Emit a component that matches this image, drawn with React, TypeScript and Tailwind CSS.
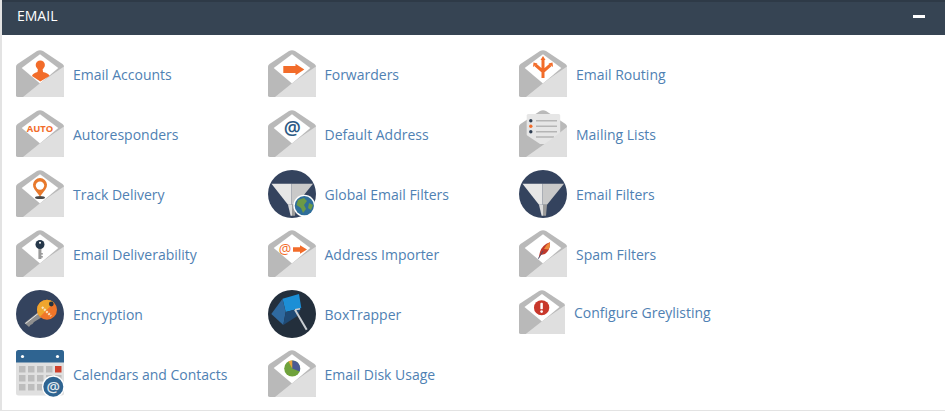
import type { ReactNode } from "react";

const ORANGE = "#f26c2a";

function Env({ children, w = 48, h = 48 }: { children?: ReactNode; w?: number; h?: number }) {
  return (
    <svg viewBox="0 0 48 48" width={w} height={h} className="shrink-0 block" preserveAspectRatio="none">
      <path d="M0 16.5 Q0 15 1.5 14 L21 1 Q24 -0.6 27 1 L46.5 14 Q48 15 48 16.5 L48 45.5 Q48 47 46 47 L2 47 Q0 47 0 45.5 Z" fill="#b9b9b9" />
      <path d="M5.7 18 L24 4.3 L42.3 18 L24 33.5 Z" fill="#ffffff" />
      <path d="M7 47 L24 33.2 L34 26 L48 16.5 L48 45.5 Q48 47 46 47 Z" fill="#dfdfdf" />
      {children}
    </svg>
  );
}

function Disc({ fill, children }: { fill: string; children?: ReactNode }) {
  return (
    <svg viewBox="0 0 48 48" width={48} height={48} className="shrink-0 block">
      <circle cx="24" cy="24" r="24" fill={fill} />
      {children}
    </svg>
  );
}

function Funnel() {
  return (
    <>
      <path d="M3.5 13.7 L23.5 13.7 L23.5 34.7 L20 34.7 Z" fill="#e6e6e6" />
      <path d="M23.5 13.7 L45 13.7 L28 34.7 L23.5 34.7 Z" fill="#c9c9c9" />
      <path d="M20 34.7 L24 34.7 L24 45.7 L22.6 45.7 Z" fill="#dcdcdc" />
      <path d="M24 34.7 L28 34.7 L27 45.7 L24 45.7 Z" fill="#9a9a9a" />
    </>
  );
}

function Arrow({ x1, x2, y, head, hh, sh }: { x1: number; x2: number; y: number; head: number; hh: number; sh: number }) {
  return (
    <path
      d={`M${x1} ${y - sh} L${head} ${y - sh} L${head} ${y - hh} L${x2} ${y} L${head} ${y + hh} L${head} ${y + sh} L${x1} ${y + sh} Z`}
      fill={ORANGE}
    />
  );
}

const icons: Record<string, ReactNode> = {
  person: (
    <Env>
      <circle cx="24.3" cy="15" r="4.6" fill={ORANGE} />
      <path d="M22 18 L26.5 18 L27 22 Q33 23.5 33.5 26 L24.3 31.5 L16 26 Q16.5 23.5 21.5 22 Z" fill={ORANGE} />
    </Env>
  ),
  forward: (
    <Env>
      <Arrow x1={15.3} x2={36.3} y={19.5} head={27.5} hh={5.7} sh={3.4} />
    </Env>
  ),
  routing: (
    <Env>
      <path d="M24 28 L24 9 M24 21.5 L16.5 15 M24 21.5 L31.5 15" stroke={ORANGE} strokeWidth="3" fill="none" />
      <path d="M21.5 10 L24 6 L26.5 10 Z M14 17 L14.5 12.5 L18.5 13.5 Z M34 17 L33.5 12.5 L29.5 13.5 Z" fill={ORANGE} />
    </Env>
  ),
  auto: (
    <Env>
      <text x="24" y="22" textAnchor="middle" fontSize="9.4" fontWeight="700" fontFamily="'Open Sans', sans-serif" fill={ORANGE}>
        AUTO
      </text>
    </Env>
  ),
  at: (
    <Env>
      <text x="24.3" y="25" textAnchor="middle" fontSize="19" fontWeight="600" fontFamily="'Open Sans', sans-serif" fill="#2c5a85">
        @
      </text>
    </Env>
  ),
  list: (
    <svg viewBox="0 0 48 48" width={48} height={48} className="shrink-0 block">
      <path d="M0 16.5 Q0 15 1.5 14 L21 1 Q24 -0.6 27 1 L46.5 14 Q48 15 48 16.5 L48 45.5 Q48 47 46 47 L2 47 Q0 47 0 45.5 Z" fill="#b9b9b9" />
      <rect x="7.7" y="4" width="33.5" height="30" rx="1.5" fill="#e6e6e6" />
      <circle cx="11.8" cy="10.8" r="1.7" fill="#2f3e52" />
      <circle cx="11.8" cy="16.2" r="1.7" fill={ORANGE} />
      <circle cx="11.8" cy="21.8" r="1.7" fill="#2f3e52" />
      <path d="M17 10.8 H38 M17 16.2 H38 M17 21.8 H38 M17 27 H35" stroke="#b5b5b5" strokeWidth="1.4" />
      <path d="M0 20 L24 36 L7 47 L2 47 Q0 47 0 45.5 Z" fill="#b9b9b9" />
      <path d="M7 47 L24 35 L34 28 L48 17 L48 45.5 Q48 47 46 47 Z" fill="#dfdfdf" />
    </svg>
  ),
  pin: (
    <Env>
      <ellipse cx="24" cy="27.5" rx="5" ry="1.6" fill="#4a4a4a" />
      <path d="M24 26.5 L18.6 19.5 A7 7 0 1 1 29.4 19.5 Z" fill="#e8792c" />
      <circle cx="24" cy="15.6" r="4.2" fill="#ffffff" />
    </Env>
  ),
  globalFilter: (
    <Disc fill="#34435e">
      <Funnel />
      <circle cx="36.3" cy="35.7" r="11" fill="#ffffff" />
      <circle cx="36.3" cy="35.7" r="9.6" fill="#2f6e9a" />
      <path d="M30 30 L36 28 L39 31 L36 35 L38 39 L35 43 L33 38 L28.5 35 Z M41 33 L45 35 L43 40 L40 38 Z" fill="#6c9a45" />
    </Disc>
  ),
  filter: (
    <Disc fill="#34435e">
      <Funnel />
    </Disc>
  ),
  key: (
    <Env>
      <rect x="22.4" y="17" width="3" height="12" fill="#9a9a9a" />
      <rect x="25" y="23" width="1.8" height="1.6" fill="#9a9a9a" />
      <rect x="25" y="26" width="1.8" height="1.6" fill="#9a9a9a" />
      <circle cx="24" cy="14.5" r="4.5" fill="#26384a" />
      <circle cx="24" cy="12.8" r="1" fill="#ffffff" />
    </Env>
  ),
  importer: (
    <Env>
      <text x="17" y="24" textAnchor="middle" fontSize="14" fontWeight="500" fontFamily="'Open Sans', sans-serif" fill={ORANGE}>
        @
      </text>
      <Arrow x1={25} x2={39} y={19.5} head={32} hh={4.3} sh={2.2} />
    </Env>
  ),
  spam: (
    <Env>
      <path d="M19.5 28.5 L21 22 Q23 15 31 12.3 Q31.5 20 26 24 L22 25 Z" fill="#c0392b" />
      <path d="M25 19 Q27 14.5 31 12.3 Q31.5 16 29.5 19.5 Z" fill="#ee8a3a" />
      <path d="M19.3 28.8 L24 21" stroke="#38507a" strokeWidth="0.8" />
    </Env>
  ),
  encrypt: (
    <Disc fill="#34435e">
      <path d="M8.5 33 L23 21.5 L27 26.5 L18 32 L16.5 34 L14.5 35 L13 37 Z" fill="#8f8f8f" />
      <path d="M9.5 33.5 L24 22" stroke="#e6e6e6" strokeWidth="1" />
      <circle cx="31" cy="19.7" r="10" fill="#f0762a" />
      <path d="M24 12.5 A10 10 0 0 1 38 12.5 L24 26.8 A10 10 0 0 1 24 12.5 Z" fill="#efa52d" />
      <circle cx="35.3" cy="14" r="2.4" fill="#26333f" />
      <path d="M26 17 L35 26" stroke="#f7e3c0" strokeWidth="2.2" strokeDasharray="2 1" />
    </Disc>
  ),
  box: (
    <Disc fill="#232f3c">
      <path d="M14.5 8.7 L31 4 L33.3 18 L17.7 22 Z" fill="#1c8fd6" />
      <path d="M3.3 24 L14.5 8.7 L17.7 22 L15.3 35 Z" fill="#2f6aa0" />
      <path d="M17.7 22 L33.3 18 L29 26.3 L15.3 35 Z" fill="#1f4a75" />
      <path d="M27 19.7 L38.7 39.7" stroke="#c9ced3" strokeWidth="2" />
      <path d="M27 19.7 L32 18.7" stroke="#c9ced3" strokeWidth="1.4" />
    </Disc>
  ),
  grey: (
    <Env w={46} h={45}>
      <circle cx="23.6" cy="18.8" r="8" fill="#c8372b" />
      <rect x="22.3" y="13.6" width="2.6" height="7" rx="1" fill="#ffffff" />
      <circle cx="23.6" cy="23" r="1.4" fill="#ffffff" />
    </Env>
  ),
  calendar: (
    <svg viewBox="0 0 48 48" width={48} height={48} className="shrink-0 block">
      <rect x="0" y="0" width="48" height="45.5" rx="2.5" fill="#e0e0e0" />
      <path d="M0 12.5 L0 2.5 Q0 0 2.5 0 L45.5 0 Q48 0 48 2.5 L48 12.5 Z" fill="#2f6491" />
      <circle cx="6.5" cy="6.5" r="1.6" fill="#ffffff" />
      <circle cx="41.5" cy="6.5" r="1.6" fill="#ffffff" />
      {[16, 25, 34].map((y) =>
        [3, 12, 21, 30, 39].map((x) => (
          <rect key={`${x}-${y}`} x={x} y={y} width="6.5" height="6.5" fill={x === 39 && y === 16 ? "#d0402c" : "#bdbdbd"} />
        ))
      )}
      <circle cx="37.3" cy="36.7" r="11.3" fill="#ffffff" />
      <circle cx="37.3" cy="36.7" r="10" fill="#2f6491" />
      <text x="37.3" y="42" textAnchor="middle" fontSize="15" fontWeight="600" fontFamily="'Open Sans', sans-serif" fill="#e0e8ee">
        @
      </text>
    </svg>
  ),
  usage: (
    <Env>
      <circle cx="24.2" cy="18.5" r="8" fill="#6fa23c" />
      <path d="M24.2 18.5 L24.2 10.5 A8 8 0 0 1 31.6 21.5 Z" fill="#4a5a94" />
      <path d="M24.2 18.5 L20.5 11.4 A8 8 0 0 1 24.2 10.5 Z" fill="#e8a33d" />
    </Env>
  ),
};

const items: { icon: string; label: string; grey?: boolean }[] = [
  { icon: "person", label: "Email Accounts" },
  { icon: "forward", label: "Forwarders" },
  { icon: "routing", label: "Email Routing" },
  { icon: "auto", label: "Autoresponders" },
  { icon: "at", label: "Default Address" },
  { icon: "list", label: "Mailing Lists" },
  { icon: "pin", label: "Track Delivery" },
  { icon: "globalFilter", label: "Global Email Filters" },
  { icon: "filter", label: "Email Filters" },
  { icon: "key", label: "Email Deliverability" },
  { icon: "importer", label: "Address Importer" },
  { icon: "spam", label: "Spam Filters" },
  { icon: "encrypt", label: "Encryption" },
  { icon: "box", label: "BoxTrapper" },
  { icon: "grey", label: "Configure Greylisting", grey: true },
  { icon: "calendar", label: "Calendars and Contacts" },
  { icon: "usage", label: "Email Disk Usage" },
];

export default function App() {
  return (
    <div className="w-[945px] h-[411px] overflow-hidden bg-white font-['Open_Sans',sans-serif]">
      <div className="border-l-2 border-b border-[#e3e3e3] h-[411px]">
        <div className="h-[35px] bg-[#364453] border-t-2 border-[#2e3a47] pl-[15px] pr-5 flex items-center justify-between">
          <h2 className="text-sm text-white font-normal leading-none -mt-[5px]">EMAIL</h2>
          <span className="w-[12px] h-[3px] bg-white -mt-[4px]" />
        </div>
        <div className="grid grid-cols-[251.5px_251.5px_251.5px] pl-[14px] pt-[15px]">
          {items.map((it) => (
            <a key={it.label} className="flex h-[60px] items-start text-sm text-[#4f81b3]">
              {icons[it.icon]}
              <span className={it.grey ? "ml-[9px] leading-[46px]" : "ml-[9px] leading-[50px]"}>{it.label}</span>
            </a>
          ))}
        </div>
      </div>
    </div>
  );
}
